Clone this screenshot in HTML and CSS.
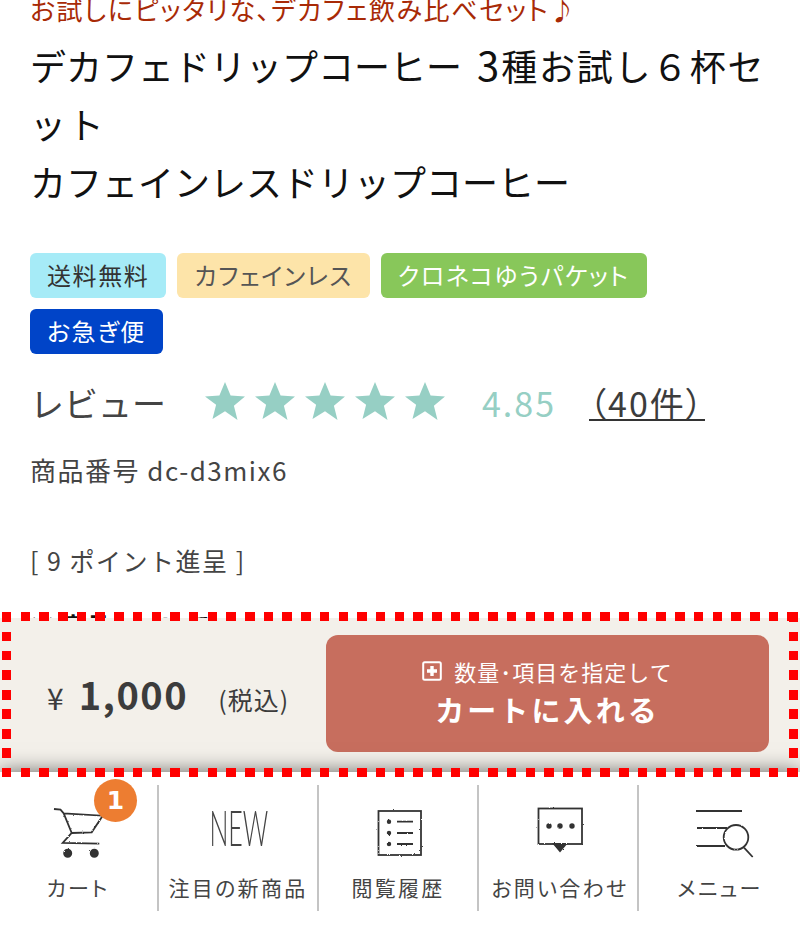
FILE: index.html
```html
<!doctype html>
<html lang="ja">
  <head>
    <meta charset="UTF-8" />
    <meta name="viewport" content="width=device-width, initial-scale=1" />
    <title>デカフェドリップコーヒー 3種お試し6杯セット</title>
    <link rel="stylesheet" href="styles.css">
  </head>
  <body>
    <svg class="defs" width="0" height="0">
      <filter id="rough">
        <feTurbulence type="fractalNoise" baseFrequency="0.8" numOctaves="2" seed="3" />
        <feDisplacementMap in="SourceGraphic" scale="2" />
      </filter>
    </svg>

    <div class="page">
      <main class="product">
        <p class="catch">お試しにピッタリな、デカフェ飲み比べセット♪</p>
        <h1>デカフェドリップコーヒー <span class="num">3</span><span class="spaced">種お試し６杯セット</span><br>カフェインレスドリップコーヒー</h1>

        <ul class="tags">
          <li class="tag tag-free">送料無料</li>
          <li class="tag tag-decaf">カフェインレス</li>
          <li class="tag tag-packet">クロネコゆうパケット</li>
          <li class="tag tag-express">お急ぎ便</li>
        </ul>

        <div class="review">
          <span class="review-label">レビュー</span>
          <span class="stars">
            <svg viewBox="0 0 40 40"><path d="M20 1l5.6 13.6 14.4.9-11.1 9.3 3.6 14.2L20 30.2 7.5 38l3.6-14.2L0 15.5l14.4-.9z" /></svg>
            <svg viewBox="0 0 40 40"><path d="M20 1l5.6 13.6 14.4.9-11.1 9.3 3.6 14.2L20 30.2 7.5 38l3.6-14.2L0 15.5l14.4-.9z" /></svg>
            <svg viewBox="0 0 40 40"><path d="M20 1l5.6 13.6 14.4.9-11.1 9.3 3.6 14.2L20 30.2 7.5 38l3.6-14.2L0 15.5l14.4-.9z" /></svg>
            <svg viewBox="0 0 40 40"><path d="M20 1l5.6 13.6 14.4.9-11.1 9.3 3.6 14.2L20 30.2 7.5 38l3.6-14.2L0 15.5l14.4-.9z" /></svg>
            <svg viewBox="0 0 40 40"><path d="M20 1l5.6 13.6 14.4.9-11.1 9.3 3.6 14.2L20 30.2 7.5 38l3.6-14.2L0 15.5l14.4-.9z" /></svg>
          </span>
          <span class="review-score">4.85</span>
          <a class="review-count" href="#">（40件）</a>
        </div>

        <p class="code">商品番号 dc-d3mix6</p>
        <p class="points">[ 9 ポイント進呈 ]</p>
        <p class="note">※ 商品について</p>
      </main>

      <section class="cart-bar">
        <div class="price">
          <span class="yen">¥</span>
          <span class="amount">1,000</span>
          <span class="tax">(税込)</span>
        </div>
        <button class="cart-button" type="button">
          <span class="cart-sub">
            <svg viewBox="0 0 20 20" width="20" height="20">
              <rect x="1.2" y="1.2" width="17.6" height="17.6" rx="1.5" fill="none" stroke="#fff" stroke-width="2" />
              <path d="M10 5v10M5 10h10" stroke="#fff" stroke-width="3.4" />
            </svg>
            数量･項目を指定して
          </span>
          <span class="cart-main">カートに入れる</span>
        </button>
        <div class="dashes"></div>
      </section>

      <nav class="tabbar">
        <a class="tab" href="#">
          <span class="tab-icon">
            <svg class="ink" viewBox="0 0 54 56" width="54" height="56">
              <path d="M3 4l6.500.7 3.200 3.600 39 2.400-11 16.600-20 .7-9 10 36.600.7M12.700 8.300l8 19.700" />
              <circle class="fill" cx="16.700" cy="48.300" r="3.600" />
              <circle class="fill" cx="43.300" cy="48.300" r="3.600" />
            </svg>
          </span>
          <span class="tab-label">カート</span>
          <span class="badge">1</span>
        </a>
        <a class="tab" href="#">
          <span class="tab-icon icon-new"><span class="new-mark">NEW</span></span>
          <span class="tab-label">注目の新商品</span>
        </a>
        <a class="tab" href="#">
          <span class="tab-icon icon-list">
            <svg class="ink" viewBox="0 0 48 50" width="48" height="50">
              <rect x="2.500" y="3" width="42.500" height="44" />
              <path d="M21 13.700h16M21 25h16M21 36h16" />
              <circle class="fill" cx="13" cy="13.700" r="1.300" />
              <circle class="fill" cx="13" cy="25" r="1.300" />
              <circle class="fill" cx="13" cy="36" r="1.300" />
            </svg>
          </span>
          <span class="tab-label">閲覧履歴</span>
        </a>
        <a class="tab" href="#">
          <span class="tab-icon icon-contact">
            <svg class="ink" viewBox="0 0 50 50" width="50" height="50">
              <rect x="2.500" y="2.500" width="43.500" height="35.500" />
              <path class="fill" d="M18 38h12l-6 7z" />
              <circle class="fill" cx="13" cy="20" r="1.800" />
              <circle class="fill" cx="24" cy="20" r="1.800" />
              <circle class="fill" cx="36" cy="20" r="1.800" />
            </svg>
          </span>
          <span class="tab-label tab-label-contact">お問い合わせ</span>
        </a>
        <a class="tab" href="#">
          <span class="tab-icon icon-menu">
            <svg class="ink" viewBox="0 0 60 52" width="60" height="52">
              <path d="M2 4h46M3 21h30M3 39h28M50 40.700l8.700 9.300" />
              <circle cx="42" cy="30.300" r="12.300" />
            </svg>
          </span>
          <span class="tab-label tab-label-menu">メニュー</span>
        </a>
      </nav>
    </div>
  </body>
</html>
```

FILE: styles.css
```css
* {
  box-sizing: border-box;
}
body {
  margin: 0;
  background: #fff;
  color: #333;
  font-family: "Noto Sans CJK JP", "Noto Sans", sans-serif;
}
a {
  color: inherit;
  text-decoration: none;
}
p {
  margin: 0;
}
.defs {
  position: absolute;
}
.page {
  display: flex;
  flex-direction: column;
  height: 100vh;
  overflow: hidden;
}

/* product details, scrolled slightly under the top edge */
.product {
  flex: 1;
  min-height: 0;
  overflow: hidden;
  padding: 0 30px;
}
.catch {
  margin-top: -9px;
  color: #a82a06;
  font-size: 26px;
  line-height: 36px;
  letter-spacing: 1.6px;
  font-feature-settings: "palt";
}
h1 {
  margin: 0;
  padding-top: 9px;
  color: #111;
  font-size: 36px;
  font-weight: 400;
  line-height: 58px;
  line-break: loose;
  word-spacing: 7px;
}
.num {
  font-size: 40px;
  line-height: 1;
  letter-spacing: 2px;
}
.spaced {
  letter-spacing: 1.7px;
}
.tags {
  display: flex;
  flex-wrap: wrap;
  gap: 11px;
  margin: 43px 0 0;
  padding: 0;
  list-style: none;
}
.tag {
  height: 45px;
  padding: 0 17px;
  border-radius: 6px;
  font-size: 24px;
  line-height: 43px;
  letter-spacing: 1.6px;
  font-feature-settings: "palt";
}
.tag-free {
  background: #a6ebf7;
  color: #333;
}
.tag-decaf {
  background: #fde4a9;
  color: #555;
}
.tag-packet {
  background: #88c75a;
  color: #fff;
}
.tag-express {
  background: #0044c8;
  color: #fff;
}
.review {
  display: flex;
  align-items: center;
  height: 60px;
  margin-top: 17px;
}
.review-label {
  width: 175px;
  padding-top: 4px;
  color: #444;
  font-size: 34px;
  line-height: 44px;
}
.stars {
  display: flex;
  gap: 10px;
}
.stars svg {
  width: 40px;
  height: 40px;
  fill: #96cfc4;
}
.review-score {
  margin-left: 37px;
  padding-top: 2px;
  color: #96cfc4;
  font-size: 34px;
  letter-spacing: 2px;
}
.review-count {
  margin: 2px 0 0 33px;
  padding-top: 4px;
  border-bottom: 2px solid #333;
  color: #3c3c3c;
  font-size: 34px;
  line-height: 32px;
  letter-spacing: 2px;
  font-feature-settings: "palt";
}
.code,
.points {
  color: #444;
  font-size: 25px;
  line-height: 36px;
  letter-spacing: 1.5px;
}
.code {
  margin-top: 21px;
  font-size: 26px;
}
.points {
  margin-top: 54px;
}
.note {
  margin-top: 29px;
  color: #111;
  font-size: 25px;
  font-weight: 700;
  line-height: 36px;
}

/* sticky cart strip */
.cart-bar {
  position: relative;
  display: flex;
  align-items: flex-start;
  justify-content: space-between;
  flex: none;
  height: 154px;
  padding: 17px 31px 0 47px;
  background: #f3f0ea;
}
.price {
  display: flex;
  align-items: baseline;
  margin-top: 31px;
  color: #3c3c3c;
}
.yen {
  font-size: 30px;
}
.amount {
  margin-left: 15px;
  font-size: 38px;
  font-weight: 700;
  letter-spacing: 1.5px;
}
.tax {
  margin-left: 30px;
  font-size: 25px;
  letter-spacing: 1px;
}
.cart-button {
  display: flex;
  flex-direction: column;
  align-items: center;
  justify-content: center;
  width: 443px;
  height: 117px;
  padding: 0 0 3px;
  border: none;
  border-radius: 12px;
  background: #c76e5e;
  color: #fff;
  font-family: inherit;
  cursor: pointer;
}
.cart-sub {
  display: flex;
  align-items: center;
  gap: 12px;
  font-size: 22px;
  line-height: 34px;
  letter-spacing: 1px;
}
.cart-main {
  font-size: 29px;
  font-weight: 700;
  line-height: 42px;
  letter-spacing: 3.1px;
}
.dashes {
  position: absolute;
  top: -6px;
  right: 2px;
  bottom: -5px;
  left: 2px;
  z-index: 2;
  pointer-events: none;
  background:
    repeating-linear-gradient(90deg, #f00 0 9.5px, transparent 9.5px 18.7px) top / 100% 9px no-repeat,
    repeating-linear-gradient(90deg, #f00 0 9.5px, transparent 9.5px 18.7px) bottom / 100% 9px no-repeat,
    repeating-linear-gradient(180deg, #f00 0 9.5px, transparent 9.5px 19.5px) left / 9px 100% no-repeat,
    repeating-linear-gradient(180deg, #f00 0 9.5px, transparent 9.5px 19.5px) right / 9px 100% no-repeat;
}

/* bottom tabs */
.tabbar {
  position: relative;
  z-index: 1;
  display: flex;
  flex: none;
  height: 156px;
  padding: 13px 0 17px;
  margin-left: -1px;
  background: #fff;
  box-shadow: 0 0 20px rgba(0, 0, 0, 0.6);
}
.tab {
  position: relative;
  display: flex;
  flex-direction: column;
  align-items: center;
  flex: none;
  width: 160px;
  border-right: 2px solid #c4c4c4;
}
.tab:last-child {
  border-right: none;
}
.tab-icon {
  display: flex;
  align-items: center;
  justify-content: center;
  height: 87px;
  padding-top: 9px;
}
.icon-new {
  padding: 0 0 4px 2px;
}
.icon-list {
  padding-left: 4px;
}
.icon-contact {
  padding: 5px 0 0 6px;
}
.icon-menu {
  padding-left: 10px;
}
.tab-label {
  color: #444;
  font-size: 21px;
  line-height: 30px;
  letter-spacing: 2.3px;
  font-feature-settings: "palt";
}
.tab-label-contact {
  padding-left: 4px;
}
.tab-label-menu {
  padding-left: 2px;
}
.badge {
  position: absolute;
  top: -6px;
  left: 95px;
  width: 43px;
  height: 43px;
  border-radius: 50%;
  background: #ed7d31;
  color: #fff;
  font-family: "DejaVu Sans", sans-serif;
  font-size: 25px;
  font-weight: 700;
  line-height: 43px;
  text-align: center;
}
.ink {
  fill: none;
  stroke: #333;
  stroke-width: 1.8;
  filter: url(#rough);
}
.ink .fill {
  fill: #333;
}
.new-mark {
  display: block;
  color: #444;
  font-family: Lato, sans-serif;
  font-size: 50px;
  font-weight: 300;
  line-height: 50px;
  transform: scaleX(0.5);
}
```
